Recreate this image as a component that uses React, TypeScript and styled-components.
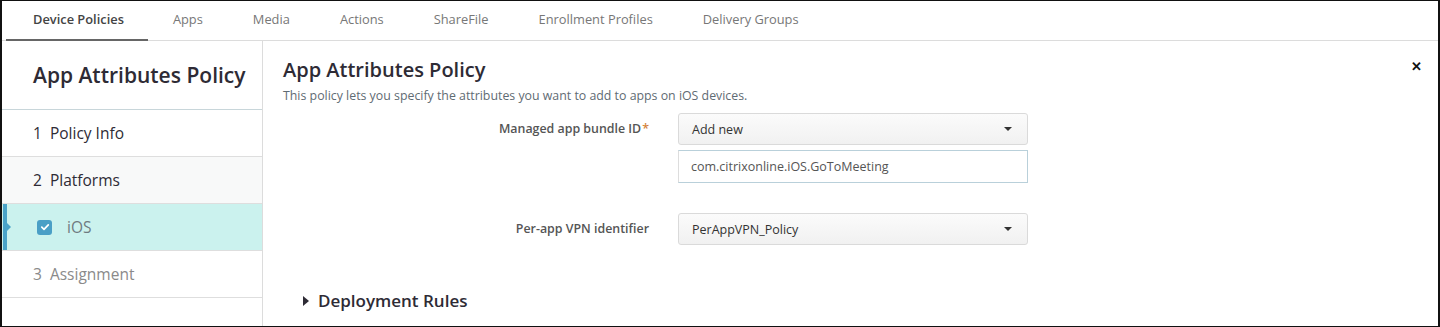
import styled, { createGlobalStyle } from 'styled-components';

const tabs = ['Device Policies', 'Apps', 'Media', 'Actions', 'ShareFile', 'Enrollment Profiles', 'Delivery Groups'];

const steps = [
  { key: 'info', label: '1  Policy Info', kind: 'step' as const },
  { key: 'platforms', label: '2  Platforms', kind: 'group' as const },
  { key: 'ios', label: 'iOS', kind: 'platform' as const },
  { key: 'assign', label: '3  Assignment', kind: 'muted' as const },
];

const GlobalStyle = createGlobalStyle`
  html, body {
    margin: 0;
    padding: 0;
    background: #fff;
  }
  body {
    font-family: 'Open Sans', 'Noto Sans', sans-serif;
    color: #2e2b35;
  }
`;

const App = () => {
  return (
    <>
      <GlobalStyle />
      <Frame>
        <TabBar>
          {tabs.map((tab, idx) => (
            <Tab key={tab} active={idx === 0}>
              {tab}
            </Tab>
          ))}
        </TabBar>
        <Body>
          <Sidebar>
            <SideTitle>App Attributes Policy</SideTitle>
            {steps.map((step) => (
              <Step key={step.key} kind={step.kind}>
                {step.kind === 'platform' && <CheckIcon />}
                {step.label}
              </Step>
            ))}
          </Sidebar>
          <Main>
            <Header>
              <div>
                <Title>App Attributes Policy</Title>
                <Subtitle>This policy lets you specify the attributes you want to add to apps on iOS devices.</Subtitle>
              </div>
              <Close>✕</Close>
            </Header>
            <Form>
              <Label>
                Managed app bundle ID<Required>*</Required>
              </Label>
              <Fields>
                <Select>
                  Add new
                  <Caret />
                </Select>
                <Input>com.citrixonline.iOS.GoToMeeting</Input>
              </Fields>
              <Spacer />
              <Label>Per-app VPN identifier</Label>
              <Fields>
                <Select>
                  PerAppVPN_Policy
                  <Caret />
                </Select>
              </Fields>
            </Form>
            <Section>
              <Triangle />
              Deployment Rules
            </Section>
          </Main>
        </Body>
      </Frame>
    </>
  );
};

const CheckIcon = () => (
  <Check>
    <svg width="10" height="10" viewBox="0 0 10 10">
      <path d="M1.8 5.2 L4 7.3 L8.3 2.8" fill="none" stroke="#fff" strokeWidth="1.7" strokeLinecap="round" strokeLinejoin="round" />
    </svg>
  </Check>
);

const Frame = styled.div`
  box-sizing: border-box;
  width: 1440px;
  height: 327px;
  border: 1px solid #111;
  border-left-width: 2px;
  border-right-width: 2px;
  display: flex;
  flex-direction: column;
  overflow: hidden;
`;

const TabBar = styled.nav`
  display: flex;
  height: 39px;
  padding-left: 4px;
  border-bottom: 1px solid #dcdcdc;
`;

const Tab = styled.div<{ active: boolean }>`
  display: flex;
  align-items: center;
  padding: 0 24px 2px 27px;
  font-size: 12.85px;
  font-weight: ${({ active }) => (active ? 600 : 400)};
  color: ${({ active }) => (active ? '#444' : '#777')};
  border-bottom: 2px solid ${({ active }) => (active ? '#666' : 'transparent')};
  margin-bottom: -1px;
  & + & {
    padding-left: 25px;
    padding-right: 25px;
  }
`;

const Body = styled.div`
  flex: 1;
  display: flex;
`;

const Sidebar = styled.aside`
  width: 260px;
  border-right: 1px solid #dcdcdc;
  display: flex;
  flex-direction: column;
`;

const SideTitle = styled.h2`
  margin: 0;
  height: 69px;
  box-sizing: border-box;
  padding-left: 31px;
  display: flex;
  align-items: center;
  font-size: 21px;
  font-weight: 600;
  color: #2e2b35;
  border-bottom: 1px solid #c8d6da;
`;

const Step = styled.div<{ kind: 'step' | 'group' | 'platform' | 'muted' }>`
  position: relative;
  height: 46px;
  display: flex;
  align-items: center;
  gap: 15px;
  padding-left: ${({ kind }) => (kind === 'platform' ? '35px' : '31px')};
  font-size: 15.5px;
  white-space: pre;
  border-bottom: 1px solid #dedede;
  color: ${({ kind }) => (kind === 'muted' ? '#8a8a8a' : kind === 'platform' ? '#6f7a80' : '#2e2b35')};
  background: ${({ kind }) => (kind === 'group' ? '#f8f9f9' : kind === 'platform' ? '#cbf2ee' : '#fff')};
  ${({ kind }) =>
    kind === 'platform' &&
    `
    &::before {
      content: '';
      position: absolute;
      left: 1px;
      top: 0;
      bottom: 0;
      width: 4px;
      background: #4aa3c8;
    }
    &::after {
      content: '';
      position: absolute;
      left: 5px;
      top: 19px;
      border-style: solid;
      border-width: 4px 0 4px 4px;
      border-color: transparent transparent transparent #4aa3c8;
    }
  `}
`;

const Check = styled.span`
  width: 15px;
  height: 15px;
  border-radius: 3px;
  background: #4a9fc6;
  display: inline-flex;
  align-items: center;
  justify-content: center;
`;

const Main = styled.main`
  flex: 1;
  display: flex;
  flex-direction: column;
  padding: 16px 0 0 20px;
`;

const Header = styled.header`
  display: flex;
  justify-content: space-between;
  align-items: flex-start;
`;

const Title = styled.h1`
  margin: 0;
  font-size: 20px;
  font-weight: 600;
  line-height: 26px;
  color: #2e2b35;
`;

const Subtitle = styled.p`
  margin: 4px 0 0;
  font-size: 12.35px;
  line-height: 18px;
  color: #5f6b73;
`;

const Close = styled.button`
  border: none;
  background: none;
  padding: 0;
  margin: 2px 16px 0 0;
  font-size: 13px;
  font-weight: 700;
  color: #111;
  cursor: pointer;
`;

const Form = styled.div`
  display: grid;
  grid-template-columns: 366px 350px;
  column-gap: 29px;
  margin-top: 8px;
`;

const Label = styled.div`
  justify-self: end;
  height: 30px;
  display: flex;
  align-items: center;
  font-size: 12.4px;
  font-weight: 600;
  color: #555;
`;

const Required = styled.span`
  color: #d4823a;
  margin-left: 1px;
`;

const Fields = styled.div`
  display: flex;
  flex-direction: column;
  gap: 5px;
`;

const Select = styled.div`
  box-sizing: border-box;
  height: 32px;
  display: flex;
  align-items: center;
  justify-content: space-between;
  padding: 0 15px 0 13px;
  border: 1px solid #dadada;
  border-radius: 3px;
  background: linear-gradient(#fbfbfb, #f1f1f1);
  font-size: 12.5px;
  color: #333;
`;

const Caret = styled.span`
  border-style: solid;
  border-width: 4px 4px 0 4px;
  border-color: #333 transparent transparent transparent;
`;

const Input = styled.div`
  box-sizing: border-box;
  height: 33px;
  display: flex;
  align-items: center;
  padding-left: 12px;
  border: 1px solid #b9d0da;
  border-left-color: #ddd;
  font-size: 12.5px;
  color: #555;
`;

const Spacer = styled.div`
  grid-column: 1 / -1;
  height: 30px;
`;

const Section = styled.div`
  display: flex;
  align-items: center;
  gap: 9px;
  margin: 44px 0 0 20px;
  font-size: 17px;
  font-weight: 600;
  color: #2e2b35;
`;

const Triangle = styled.span`
  border-style: solid;
  border-width: 5px 0 5px 6px;
  border-color: transparent transparent transparent #2e2b35;
`;

export default App;
